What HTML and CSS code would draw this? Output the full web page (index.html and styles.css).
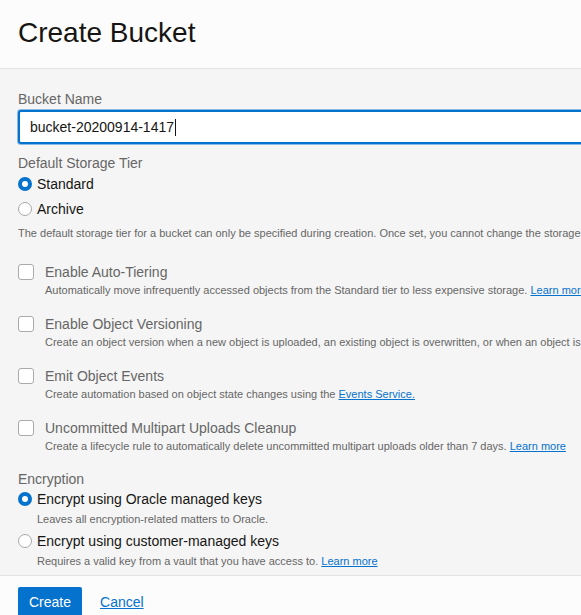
FILE: index.html
```html
<!DOCTYPE html>
<html lang="en">
  <head>
    <meta charset="UTF-8" />
    <meta name="viewport" content="width=device-width, initial-scale=1.0" />
    <title>Create Bucket</title>
    <link rel="stylesheet" href="styles.css">
  </head>
  <body>
    <!-- header -->
    <header class="panel-header">
      <h1 class="panel-title">Create Bucket</h1>
    </header>

    <!-- form -->
    <main class="panel-body">
      <label class="field-label" for="bucket-name">Bucket Name</label>
      <div class="text-input"><span id="bucket-name">bucket-20200914-1417</span><i class="caret"></i></div>

      <div class="field-label group-label">Default Storage Tier</div>
      <div class="radio-row first-tier">
        <span class="radio checked"></span>
        <span class="radio-text">Standard</span>
      </div>
      <div class="radio-row tier-row">
        <span class="radio"></span>
        <span class="radio-text">Archive</span>
      </div>
      <p class="help first-help">The default storage tier for a bucket can only be specified during creation. Once set, you cannot change the storage tier in which a bucket resides.</p>

      <div class="check-item first-check">
        <span class="checkbox"></span>
        <div>
          <div class="check-text">Enable Auto-Tiering</div>
          <p class="help">Automatically move infrequently accessed objects from the Standard tier to less expensive storage. <a href="#">Learn more</a></p>
        </div>
      </div>
      <div class="check-item">
        <span class="checkbox"></span>
        <div>
          <div class="check-text">Enable Object Versioning</div>
          <p class="help">Create an object version when a new object is uploaded, an existing object is overwritten, or when an object is deleted.</p>
        </div>
      </div>
      <div class="check-item">
        <span class="checkbox"></span>
        <div>
          <div class="check-text">Emit Object Events</div>
          <p class="help">Create automation based on object state changes using the <a href="#">Events Service.</a></p>
        </div>
      </div>
      <div class="check-item">
        <span class="checkbox"></span>
        <div>
          <div class="check-text">Uncommitted Multipart Uploads Cleanup</div>
          <p class="help">Create a lifecycle rule to automatically delete uncommitted multipart uploads older than 7 days. <a href="#">Learn more</a></p>
        </div>
      </div>

      <div class="field-label group-label enc-label">Encryption</div>
      <div class="radio-row first-enc">
        <span class="radio checked"></span>
        <span class="radio-text">Encrypt using Oracle managed keys</span>
      </div>
      <p class="help radio-help">Leaves all encryption-related matters to Oracle.</p>
      <div class="radio-row second-enc">
        <span class="radio"></span>
        <span class="radio-text">Encrypt using customer-managed keys</span>
      </div>
      <p class="help radio-help">Requires a valid key from a vault that you have access to. <a href="#">Learn more</a></p>
    </main>

    <!-- footer -->
    <footer class="panel-footer">
      <button class="btn-primary">Create</button>
      <a class="cancel-link" href="#">Cancel</a>
    </footer>
  </body>
</html>
```

FILE: styles.css
```css
/*global*/
* {
  margin: 0;
  padding: 0;
  box-sizing: border-box;
}

html,
body {
  width: 581px;
  height: 615px;
  overflow: hidden;
}

body {
  font-family: "Liberation Sans", Arial, sans-serif;
  color: #161513;
  background-color: #f5f5f5;
}

a {
  color: #0572ce;
  text-decoration: underline;
}

/*header*/
.panel-header {
  height: 69px;
  padding: 14px 0 0 18px;
  background-color: #fcfcfc;
  border-bottom: 1px solid #e3e3e3;
}

.panel-title {
  font-size: 28px;
  font-weight: normal;
  line-height: 38px;
  color: #161513;
}

/*body*/
.panel-body {
  height: 506px;
  padding: 21px 0 0 18px;
  white-space: nowrap;
}

.field-label {
  display: block;
  font-size: 14px;
  line-height: 18px;
  color: #666;
}

.group-label {
  margin-top: 10px;
}

.enc-label {
  margin-top: 16px;
}

.text-input {
  display: flex;
  align-items: center;
  width: 620px;
  height: 34px;
  margin-top: 2px;
  padding-left: 10px;
  background-color: #fff;
  border: 2px solid #0572ce;
  border-radius: 3px;
  box-shadow: 0 0 0 1px #8ab9e6;
  font-size: 14px;
  color: #161513;
}

.caret {
  display: inline-block;
  width: 1px;
  height: 17px;
  margin-left: 1px;
  background-color: #161513;
}

/*radio*/
.radio-row {
  display: flex;
  align-items: center;
  height: 20px;
}

.first-tier {
  margin-top: 2px;
}

.tier-row {
  margin-top: 5px;
}

.first-enc {
  margin-top: 1px;
}

.second-enc {
  margin-top: 4px;
}

.radio {
  width: 14px;
  height: 14px;
  margin-right: 5px;
  border: 1px solid #a9a9a9;
  border-radius: 50%;
  background-color: #fff;
}

.radio.checked {
  border: 4px solid #0572ce;
  background-color: #fff;
}

.radio-text {
  font-size: 14px;
}

/*help*/
.help {
  font-size: 11px;
  line-height: 15px;
  color: #666;
}

.first-help {
  margin-top: 7px;
}

.radio-help {
  margin: 3px 0 0 19px;
}

/*checkbox*/
.check-item {
  display: flex;
  align-items: flex-start;
  margin-top: 17px;
}

.first-check {
  margin-top: 22px;
}

.checkbox {
  flex-shrink: 0;
  width: 16px;
  height: 16px;
  margin: 1px 11px 0 0;
  background-color: #fff;
  border: 1px solid #a9a9a9;
  border-radius: 3px;
}

.check-text {
  font-size: 14px;
  line-height: 18px;
  margin-bottom: 2px;
  color: #666;
}

/*footer*/
.panel-footer {
  display: flex;
  align-items: flex-start;
  gap: 18px;
  height: 40px;
  padding: 11px 0 0 18px;
  background-color: #fcfcfc;
  border-top: 1px solid #e3e3e3;
}

.btn-primary {
  height: 32px;
  padding: 0 11px 2px;
  font-family: inherit;
  font-size: 14px;
  color: #fff;
  background-color: #0572ce;
  border: none;
  border-radius: 2px;
}

.cancel-link {
  font-size: 14px;
  line-height: 30px;
}
```
